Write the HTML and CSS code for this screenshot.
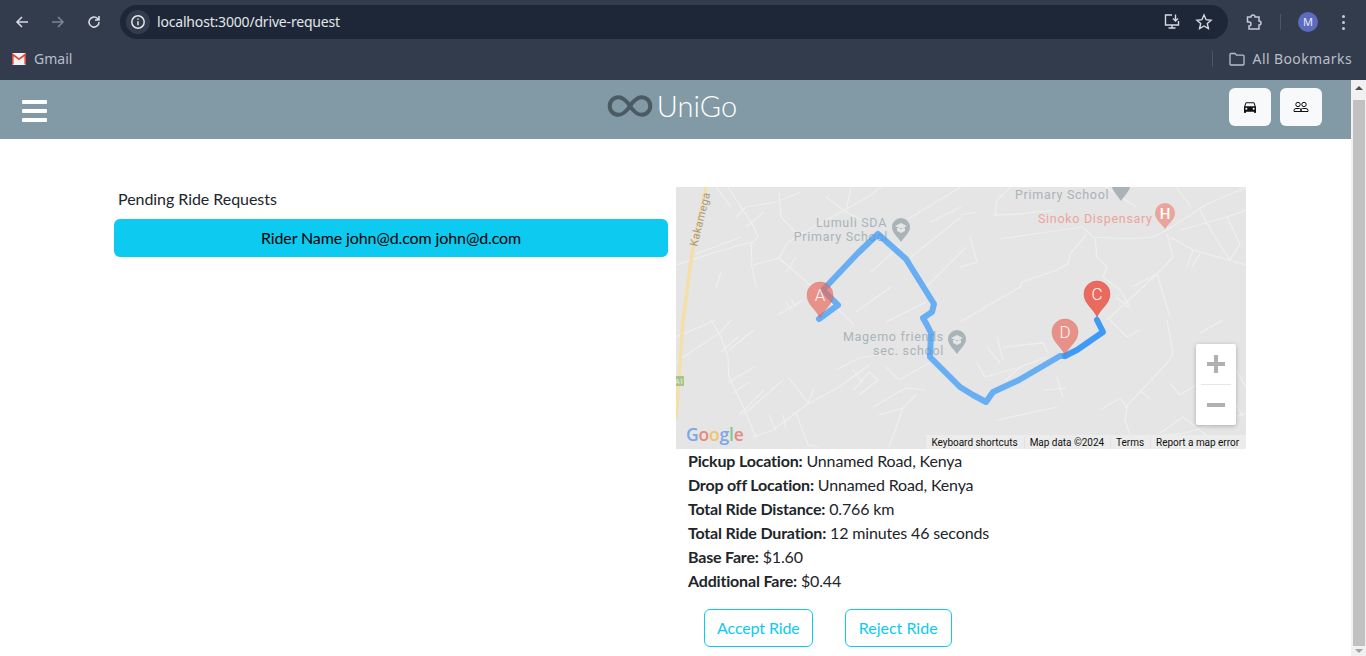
FILE: index.html
```html
<!DOCTYPE html>
<html lang="en">
<head>
    <meta charset="UTF-8">
    <title>UniGo</title>
    <link rel="stylesheet" href="styles.css">
</head>
<body>
    <div class="browser-top">
        <div class="toolbar">
            <svg class="tool-icon" viewBox="0 0 16 16"><path d="M14 8H3M8 3L3 8l5 5"/></svg>
            <svg class="tool-icon tool-off" viewBox="0 0 16 16"><path d="M2 8h11M8 3l5 5-5 5"/></svg>
            <svg class="tool-icon" viewBox="0 0 16 16"><path d="M13 8a5 5 0 1 1-1.500-3.500L13 6M13 2v4H9"/></svg>
            <div class="address-bar">
                <span class="site-info">
                    <svg viewBox="0 0 16 16"><circle cx="8" cy="8" r="6.200"/><path d="M8 7.200v4M8 4.400v1.400"/></svg>
                </span>
                <span class="url">localhost:3000/drive-request</span>
                <svg class="bar-icon install-icon" viewBox="0 0 18 18"><path d="M9 2H2.500v10h13V8M5.500 15h7M9 12v3M12.500 1.500v6M10 5.500l2.500 2.500 2.500-2.500"/></svg>
                <svg class="bar-icon" viewBox="0 0 18 18"><path d="M9 2l2.100 4.700 5 .5-3.800 3.300 1.100 5L9 13l-4.400 2.500 1.100-5L1.900 7.200l5-.5z"/></svg>
            </div>
            <svg class="ext-icon" viewBox="0 0 18 18"><path d="M2.500 4H6a2 2 0 0 1 4 0h4v4a1.800 1.800 0 0 1 0 4v4H4v-3a2 2 0 0 0 0-4H2.500z"/></svg>
            <span class="tool-divider"></span>
            <span class="avatar">M</span>
            <span class="dots"><i></i><i></i><i></i></span>
        </div>
        <div class="bookmarks">
            <svg class="gmail-icon" viewBox="0 0 14 12"><rect width="14" height="12" rx="1" fill="#f2f2f2"/><path d="M.8 11.500V1.500L7 6.200l6.200-4.700v10" fill="none" stroke="#d9473c" stroke-width="1.600"/></svg>
            <span class="bookmark-name">Gmail</span>
            <span class="bookmark-space"></span>
            <span class="tool-divider"></span>
            <svg class="folder-icon" viewBox="0 0 16 14"><path d="M1 2.500a1 1 0 0 1 1-1h4l1.500 1.600H14a1 1 0 0 1 1 1V12a1 1 0 0 1-1 1H2a1 1 0 0 1-1-1z"/></svg>
            <span class="bookmark-name bookmark-wide">All Bookmarks</span>
        </div>
    </div>

    <div class="viewport">
        <div class="page">
            <nav class="navbar">
                <div class="hamburger"><i></i><i></i><i></i></div>
                <div class="brand">
                    <svg class="brand-logo" viewBox="0 0 46 22"><path d="M23 11C19 5 15.500 2.200 11.500 2.200a8.800 8.800 0 0 0 0 17.600C15.500 19.800 19 17 23 11s7.500-8.800 11.500-8.800a8.800 8.800 0 0 1 0 17.600C30.500 19.800 27 17 23 11z"/></svg>
                    <span>UniGo</span>
                </div>
                <div class="nav-buttons">
                    <button class="nav-btn">
                        <svg viewBox="0 0 24 24"><path d="M18.920 6.010C18.720 5.420 18.160 5 17.500 5h-11c-.66 0-1.210.42-1.420 1.010L3 12v8c0 .55.45 1 1 1h1c.55 0 1-.45 1-1v-1h12v1c0 .55.45 1 1 1h1c.55 0 1-.45 1-1v-8l-2.080-5.990zM6.500 16c-.83 0-1.500-.67-1.500-1.500S5.670 13 6.500 13s1.500.67 1.500 1.500S7.330 16 6.500 16zm11 0c-.83 0-1.500-.67-1.500-1.500s.67-1.500 1.500-1.500 1.500.67 1.500 1.500-.67 1.500-1.500 1.500zM5 11l1.500-4.500h11L19 11H5z"/></svg>
                    </button>
                    <button class="nav-btn">
                        <svg class="people-icon" viewBox="0 0 16 16"><circle cx="5" cy="5.500" r="2.200"/><circle cx="11" cy="5.500" r="2.200"/><path d="M1 12.500v-1A2 2 0 0 1 3 9.500h3.500a1.500 1.500 0 0 1 1.500 1.500v1.500zM8 12.500V11a1.500 1.500 0 0 1 1.500-1.500H13a2 2 0 0 1 2 2v1z"/></svg>
                    </button>
                </div>
            </nav>

            <main class="content">
                <section class="requests">
                    <p class="requests-title">Pending Ride Requests</p>
                    <button class="rider-btn">Rider Name john@d.com john@d.com</button>
                </section>

                <section class="ride">
                    <div class="map">
                        <svg class="map-canvas" viewBox="0 0 570 262">
                            <g class="roads">
                                <path d="M52 0L78 40l4 10-7 7 1 18M0 78l40-13 35-10M20 67l45-17M77 78l26-7 9-16 25-15 28-15 30-17 10-8M103 71l22 19 40 35 13 13M40 0l15 20M60 30l10-10 30-5 25-10M103 5l2 25 17 18M88 25L70 40M45 85l-5 15M75 75l5 25M150 10l20 15M175 0l-5 25 20 10M120 70l-10 15M102 128l25-15M115 123l-5-8M120 120l-5-8M195 85l30-27M232 32l53-32M235 70l50-40M250 100l40-40M180 125l35-25M210 135l40-20M255 35l30-15"/>
                                <path d="M40 133L0 150M0 175l45-30 10-12M35 133l10 17 7 20 1 20 12 25 15 35M53 163l25-20M45 165l17-15M52 196l26-16M57 206l16-11M63 228l25-25M67 228l40-35M113 191l19 25 6-15M130 218l33-18 30-22M97 243l33-25M77 250l20-7M93 228l7 15M107 228l3 13M120 226l12 32 11 2M160 183l23-12 30-5M177 183l10 13M178 203l15-18 9 8-19 15M197 220l20-12 13-7 20 2M203 228l24-7 13-13M227 221l-14 39M210 180l13 13 30-17"/>
                                <path d="M301 176l8 14 32-9M330 193l14-13 27-10M381 190l6 20M368 203l22-2M321 233l60-13M424 223l20-12 7 10-2 12 5 15M449 221l45-48 3-7-6-33M465 205l10 7M494 196l10 12 23-15M507 230l-23 16M507 230l23 18M550 200l17 30M546 160l24 40M434 133l17 17 13-7M524 146l23-13M311 160l13 16M321 150l6 23M327 160l40-4 5 10M340 262l50-12 60 2 60-6 60-20"/>
                                <path d="M321 13l-2 15 25-1 33-4M284 28l17-3M284 80l17-5-7-25M324 52l33-5 50-7M407 40l10 10 34 2 26-2 14-7M491 43l40-26 40-17M411 47l-17 20-2 10-11 6-35 12-2 5-60 35M419 50l2 20 10 10-4 10 17 13 10 17M491 47l6 23-16 17-50 46M481 87l13 43M494 50l23 13 53 15M517 63l-6 17M524 67l-8 13M537 47l17 26 10-16-13-27 19-7M524 23l13 24M504 43l47-13M335 0l-14 13M430 0l30 20M500 0l15 20M456 100l25-13M440 110l12 10"/>
                            </g>
                            <path class="highway" d="M30 0L16 67 7 133 0 232"/>
                            <rect class="shield" x="0" y="189" width="8" height="10"/>
                            <text class="shield-text" x="7.500" y="197" text-anchor="end">A1</text>
                            <text class="road-label" transform="translate(21 60) rotate(-76)">Kakamega</text>

                            <text class="poi-label" text-anchor="end" x="211" y="40">Lumuli SDA</text>
                            <text class="poi-label" text-anchor="end" x="212" y="54">Primary School</text>
                            <text class="poi-label" x="339" y="12">Primary School</text>
                            <text class="poi-label" text-anchor="end" x="268" y="154">Magemo friends</text>
                            <text class="poi-label" text-anchor="end" x="268" y="168">sec. school</text>
                            <text class="poi-label poi-red" x="362" y="36">Sinoko Dispensary</text>

                            <path class="poi-pin" d="M225 55c-3-5-9-9-9-15a9 9 0 0 1 18 0c0 6-6 10-9 15z"/>
                            <path class="poi-cap" d="M225 36l6 3-6 3-6-3zM221 41v3l4 2 4-2v-3"/>
                            <path class="poi-pin" d="M281 167c-3-5-9-9-9-15a9 9 0 0 1 18 0c0 6-6 10-9 15z"/>
                            <path class="poi-cap" d="M281 148l6 3-6 3-6-3zM277 153v3l4 2 4-2v-3"/>
                            <path class="poi-pin" d="M445 14c-3-5-8-9-9-14h18c-1 5-6 9-9 14z"/>
                            <path class="poi-pin pin-red" d="M489 42c-3-5-10-9-10-16a10 10 0 0 1 20 0c0 7-7 11-10 16z"/>
                            <text class="poi-h" x="489" y="32" text-anchor="middle">H</text>

                            <polyline class="route route-soft" points="143,132 162,118 147,103 182,66 202,47 230,72 258,117 256,125 247,131 251,138 255,146 254,170 284,200 297,208 310,215 317,205 343,193 384,169 389,169"/>
                            <polyline class="route" points="389,169 401,163 427,145 421,133"/>

                            <g class="pin-fade">
                                <path class="marker" d="M144 131c-3-8-13-13-13-23a13 13 0 0 1 26 0c0 10-10 15-13 23z"/>
                                <text class="marker-text" x="144" y="114">A</text>
                            </g>
                            <g class="pin-fade">
                                <path class="marker" d="M389 168c-3-8-13-13-13-23a13 13 0 0 1 26 0c0 10-10 15-13 23z"/>
                                <text class="marker-text" x="389" y="151">D</text>
                            </g>
                            <path class="marker" d="M421 130c-3-8-13-13-13-23a13 13 0 0 1 26 0c0 10-10 15-13 23z"/>
                            <text class="marker-text" x="421" y="113">C</text>

                            <text class="google" x="10" y="254"><tspan fill="#7ea6e8">G</tspan><tspan fill="#e58a80">o</tspan><tspan fill="#ecc76a">o</tspan><tspan fill="#7ea6e8">g</tspan><tspan fill="#86c590">l</tspan><tspan fill="#e58a80">e</tspan></text>
                        </svg>
                        <div class="zoom-box">
                            <span class="zoom-sign">
                                <svg viewBox="0 0 18 18"><path d="M0 9h18M9 0v18"/></svg>
                            </span>
                            <i class="zoom-line"></i>
                            <span class="zoom-sign">
                                <svg viewBox="0 0 18 18"><path d="M0 9h18"/></svg>
                            </span>
                        </div>
                        <div class="map-footer">
                            <span>Keyboard shortcuts</span>
                            <span>Map data ©2024</span>
                            <span>Terms</span>
                            <span>Report a map error</span>
                        </div>
                    </div>

                    <div class="details">
                        <p><strong>Pickup Location:</strong> Unnamed Road, Kenya</p>
                        <p><strong>Drop off Location:</strong> Unnamed Road, Kenya</p>
                        <p><strong>Total Ride Distance:</strong> 0.766 km</p>
                        <p><strong>Total Ride Duration:</strong> 12 minutes 46 seconds</p>
                        <p><strong>Base Fare:</strong> $1.60</p>
                        <p><strong>Additional Fare:</strong> $0.44</p>
                    </div>

                    <div class="ride-actions">
                        <button class="outline-btn">Accept Ride</button>
                        <button class="outline-btn reject-btn">Reject Ride</button>
                    </div>
                </section>
            </main>
        </div>

        <div class="scrollbar">
            <span class="scroll-arrow"></span>
            <span class="scroll-thumb"></span>
            <span class="scroll-arrow scroll-down"></span>
        </div>
    </div>
</body>
</html>
```

FILE: styles.css
```css
* {
    margin: 0;
    padding: 0;
    box-sizing: border-box;
}

html, body {
    height: 656px;
    overflow: hidden;
}

body {
    display: flex;
    flex-direction: column;
    background-color: white;
    font-family: "Lato", "Liberation Sans", sans-serif;
    font-size: 16px;
    line-height: 24px;
    letter-spacing: -.11px;
    color: #212529;
}

/* browser top */
.browser-top {
    height: 80px;
    flex-shrink: 0;
    background-color: #333c4d;
    font-family: "Noto Sans", "Open Sans", sans-serif;
    letter-spacing: 0;
}

.toolbar {
    height: 44px;
    display: flex;
    align-items: center;
    padding-left: 14px;
}

.tool-icon {
    width: 16px;
    height: 16px;
    margin-right: 20px;
    fill: none;
    stroke: #d5d9e0;
    stroke-width: 1.6;
}

.tool-off {
    stroke: #7d8490;
}

.address-bar {
    width: 1108px;
    height: 34px;
    margin-left: -2px;
    display: flex;
    align-items: center;
    padding: 0 15px 0 6px;
    background-color: #1e2738;
    border-radius: 17px;
}

.site-info {
    width: 24px;
    height: 24px;
    display: flex;
    align-items: center;
    justify-content: center;
    background-color: #333c4d;
    border-radius: 50%;
}

.site-info svg {
    width: 16px;
    height: 16px;
    fill: none;
    stroke: #e3e6ea;
    stroke-width: 1.5;
}

.url {
    margin-left: 7px;
    flex: 1;
    font-size: 14px;
    letter-spacing: -.18px;
    color: #e3e6ea;
}

.bar-icon {
    width: 18px;
    height: 18px;
    fill: none;
    stroke: #d5d9e0;
    stroke-width: 1.4;
}

.install-icon {
    margin-right: 14px;
}

.ext-icon {
    width: 18px;
    height: 18px;
    margin-left: 17px;
    fill: none;
    stroke: #c5cad6;
    stroke-width: 1.5;
}

.tool-divider {
    width: 1px;
    height: 16px;
    margin-left: 17px;
    background-color: #4d5566;
}

.avatar {
    width: 20px;
    height: 20px;
    margin-left: 17px;
    border-radius: 50%;
    background-color: #5c6bc0;
    color: #e8eaf6;
    font-size: 11px;
    line-height: 20px;
    text-align: center;
}

.dots {
    margin-left: 24px;
    display: flex;
    flex-direction: column;
    gap: 3px;
}

.dots i {
    width: 3px;
    height: 3px;
    border-radius: 50%;
    background-color: #c5cad6;
}

.bookmarks {
    height: 36px;
    display: flex;
    align-items: center;
    padding: 0 14px 6px 12px;
}

.gmail-icon {
    width: 14px;
    height: 12px;
    margin-right: 8px;
}

.bookmark-name {
    font-size: 14px;
    color: #b9bfc9;
}

.bookmark-wide {
    letter-spacing: .4px;
}

.bookmark-space {
    flex: 1;
}

.folder-icon {
    width: 16px;
    height: 14px;
    margin: 0 8px 0 16px;
    fill: none;
    stroke: #b9bfc9;
    stroke-width: 1.3;
}

/* page */
.viewport {
    flex: 1;
    display: flex;
    min-height: 0;
}

.page {
    flex: 1;
    min-width: 0;
}

.scrollbar {
    width: 15px;
    display: flex;
    flex-direction: column;
    align-items: center;
    background-color: #f1f1f1;
}

.scroll-arrow {
    margin: 6px 0 10px;
    border-left: 4px solid transparent;
    border-right: 4px solid transparent;
    border-bottom: 4px solid #505050;
}

.scroll-down {
    margin: 3px 0 3px;
    border-bottom: 0;
    border-top: 4px solid #a3a3a3;
}

.scroll-thumb {
    width: 12px;
    flex: 1;
    background-color: #c1c1c1;
}

.navbar {
    height: 59px;
    display: grid;
    grid-template-columns: 1fr auto 1fr;
    align-items: center;
    padding: 0 29px 5px 22px;
    background-color: #829aa6;
}

.hamburger {
    display: flex;
    flex-direction: column;
    gap: 5px;
    margin-top: 7px;
}

.hamburger i {
    width: 25px;
    height: 4px;
    border-radius: 1px;
    background-color: white;
}

.brand {
    display: flex;
    align-items: center;
    gap: 4px;
    margin-top: -2px;
    font-size: 29px;
    font-weight: 300;
    letter-spacing: .1px;
    color: white;
}

.brand-logo {
    width: 46px;
    height: 22px;
    fill: none;
    stroke: #4a5b64;
    stroke-width: 4;
}

.nav-buttons {
    display: flex;
    justify-content: flex-end;
    gap: 9px;
}

.nav-btn {
    width: 42px;
    height: 38px;
    display: flex;
    align-items: center;
    justify-content: center;
    background-color: #f8f9fa;
    border: 0;
    border-radius: 6px;
}

.nav-btn svg {
    width: 16px;
    height: 16px;
    fill: #111;
}

.nav-btn .people-icon {
    fill: none;
    stroke: #111;
    stroke-width: 1;
}

.content {
    display: flex;
    gap: 8px;
    padding: 48px 0 0 114px;
}

.requests {
    width: 554px;
}

.requests-title {
    padding-left: 4px;
    margin-bottom: 8px;
    letter-spacing: -.05px;
}

.rider-btn {
    width: 100%;
    height: 38px;
    background-color: #0dcaf0;
    border: 0;
    border-radius: 6px;
    color: black;
    font: inherit;
    letter-spacing: inherit;
}

.ride {
    width: 570px;
}

/* map */
.map {
    width: 570px;
    height: 262px;
    position: relative;
    overflow: hidden;
    background-color: #e5e5e5;
    letter-spacing: 0;
}

.map-canvas {
    width: 570px;
    height: 262px;
    display: block;
}

.roads path {
    fill: none;
    stroke: #efefef;
    stroke-width: 1.200;
}

.highway {
    fill: none;
    stroke: #f5dfa8;
    stroke-width: 3.500;
}

.shield {
    fill: #a8c48a;
}

.shield-text {
    font: 7px "Roboto", sans-serif;
    fill: #eef3e4;
}

.road-label {
    font: 11px "Roboto", sans-serif;
    letter-spacing: .4px;
    fill: #a39a86;
}

.poi-label {
    font: 12.500px "Roboto", sans-serif;
    letter-spacing: .7px;
    fill: #a9b4b8;
}

.poi-red {
    fill: #eba49c;
}

.poi-pin {
    fill: #a9b4b8;
}

.poi-cap {
    fill: #e5e5e5;
}

.pin-red {
    fill: #eba49c;
}

.poi-h {
    font: 500 15px "Roboto", sans-serif;
    fill: white;
}

.route {
    fill: none;
    stroke: #3d9bf7;
    stroke-width: 6;
    stroke-linejoin: round;
    stroke-linecap: round;
}

.route-soft {
    opacity: .75;
}

.marker {
    fill: #ea6a5e;
    stroke: #c9554b;
    stroke-width: .5;
}

.marker-text {
    font: 300 17px "Roboto", sans-serif;
    fill: white;
    text-anchor: middle;
}

.pin-fade {
    opacity: .68;
}

.google {
    font: 600 17.500px "Open Sans", sans-serif;
    letter-spacing: -.2px;
}

.zoom-box {
    position: absolute;
    left: 520px;
    top: 157px;
    width: 40px;
    height: 81px;
    display: flex;
    flex-direction: column;
    align-items: center;
    background-color: white;
    border-radius: 2px;
    box-shadow: 0 1px 4px rgba(0, 0, 0, .25);
}

.zoom-sign {
    height: 40px;
    display: flex;
    align-items: center;
}

.zoom-sign svg {
    width: 18px;
    height: 18px;
    fill: none;
    stroke: #b0b0b0;
    stroke-width: 4;
}

.zoom-line {
    width: 30px;
    height: 1px;
    background-color: #e6e6e6;
}

.map-footer {
    position: absolute;
    right: 0;
    bottom: 0;
    height: 14px;
    display: flex;
    padding-top: 2px;
    background-color: #ececec;
    font: 10px/12px "Roboto", sans-serif;
    letter-spacing: -.03px;
    color: #111;
}

.map-footer span {
    padding: 0 6px 0 5px;
    border-left: 1px solid #e2e2e2;
}

.map-footer span:last-child {
    padding-right: 7px;
}

/* ride info */
.details {
    padding-left: 12px;
    letter-spacing: -.15px;
}

.details strong {
    font-weight: 700;
    letter-spacing: -.18px;
}

.ride-actions {
    display: flex;
    gap: 32px;
    margin: 16px 0 0 28px;
}

.outline-btn {
    height: 38px;
    padding: 0 12px;
    background-color: white;
    border: 1px solid #0dcaf0;
    border-radius: 6px;
    color: #0dcaf0;
    font: inherit;
    letter-spacing: inherit;
}

.reject-btn {
    padding: 0 13px;
    letter-spacing: 0;
}
```
